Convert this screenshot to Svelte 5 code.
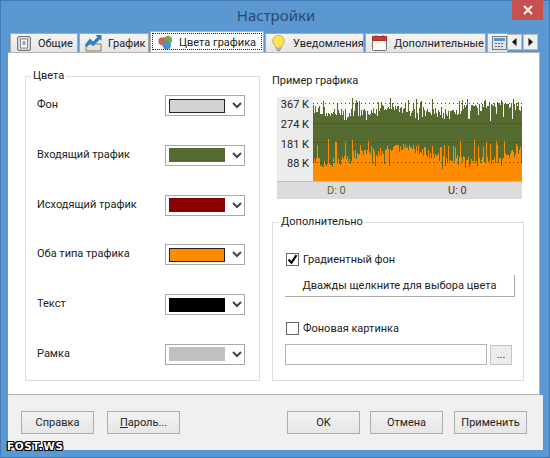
<script>
  const colorRows = [
    { label: 'Фон', color: '#d3d3d3', framed: true },
    { label: 'Входящий трафик', color: '#556b2f' },
    { label: 'Исходящий трафик', color: '#8b0000' },
    { label: 'Оба типа трафика', color: '#ff8c00', framed: true },
    { label: 'Текст', color: '#000000' },
    { label: 'Рамка', color: '#c0c0c0' }
  ];
  const axis = ['367 K', '274 K', '181 K', '88 K'];

  let seed = 41;
  const rnd = () => {
    seed = (seed * 16807) % 2147483647;
    return seed / 2147483647;
  };
  const W = 209;
  const H = 84;
  let green = '';
  let orange = '';
  for (let x = 0; x < W; x++) {
    const wave = Math.sin(x / 17) * 2.5 + Math.sin(x / 41) * 2;
    let g = 12 + wave + (rnd() - 0.5) * 9;
    if (rnd() < 0.14) g = 1 + rnd() * 6;
    if (rnd() < 0.1) g = 17 + rnd() * 7;
    let o = 58 + Math.sin(x / 23 + 1) * 6 + Math.sin(x / 9) * 2 + (rnd() - 0.5) * 10;
    if (rnd() < 0.1) o = 42 + rnd() * 8;
    if (rnd() < 0.1) o = 66 + rnd() * 6;
    green += `M${x + 0.5} ${g.toFixed(0)}V${H}`;
    orange += `M${x + 0.5} ${o.toFixed(0)}V${H}`;
  }
</script>

<div class="window">
  <header class="titlebar">
    <span class="title">Настройки</span>
    <button class="close" aria-label="Закрыть">
      <svg width="10" height="10" viewBox="0 0 10 10"><path d="M1 1l8 8M9 1l-8 8" stroke="#fff" stroke-width="2" /></svg>
    </button>
  </header>

  <nav class="tabs">
    <div class="tab w1">
      <svg width="14" height="15" viewBox="0 0 14 15"><rect x=".5" y=".5" width="13" height="14" rx="1.5" fill="#d4d4da" stroke="#77777f" /><rect x="3.5" y="3" width="7" height="9" fill="#f4f4f4" stroke="#8a8a90" /><path d="M5.5 6h3M5.5 8h3" stroke="#555" /></svg>
      <span>Общие</span>
    </div>
    <div class="tab w2">
      <svg width="17" height="17" viewBox="0 0 17 17"><path d="M1 9h15v7H1z" fill="#e9e2cc" stroke="#7c7c74" /><path d="M1 11l4-5 3 3 6-6" fill="none" stroke="#2f7fc4" stroke-width="3.2" /><path d="M10.5 0h6v6z" fill="#2f7fc4" /></svg>
      <span>График</span>
    </div>
    <div class="tab active">
      <svg width="15" height="15" viewBox="0 0 15 15"><circle cx="10" cy="5" r="4.2" fill="#6fae3c" /><circle cx="4.4" cy="6.2" r="4" fill="#c9674c" /><circle cx="8.8" cy="10.4" r="4.2" fill="#3f93d6" /></svg>
      <span>Цвета графика</span>
    </div>
    <div class="tab w4">
      <svg width="13" height="16" viewBox="0 0 13 16"><path d="M6.5 .5a5.7 5.7 0 0 0-3 10.6V13h6v-1.900a5.700 5.700 0 0 0-3-10.600z" fill="#ffe25a" stroke="#cdb137" /><path d="M4 14h5M5 15.500h3" stroke="#888" /></svg>
      <span>Уведомления</span>
    </div>
    <div class="tab w5">
      <svg width="15" height="16" viewBox="0 0 15 16"><rect x=".5" y="1.500" width="14" height="14" rx="1" fill="#fbfbf6" stroke="#77716a" /><rect x=".5" y="1.500" width="14" height="4" fill="#c9383a" stroke="#a83032" /><path d="M4 0v3M11 0v3" stroke="#555" /></svg>
      <span>Дополнительные</span>
    </div>
    <div class="tab w6">
      <svg width="15" height="14" viewBox="0 0 15 14"><rect x=".5" y=".5" width="14" height="13" fill="#dfe5ea" stroke="#6f7f8c" /><rect x="2" y="2" width="11" height="3" fill="#5f93bd" /><path d="M3 7.500h9M3 10.500h9" stroke="#55646f" stroke-dasharray="2 1" /></svg>
    </div>
    <div class="scroller">
      <button class="arrow" aria-label="Назад"><svg width="5" height="8" viewBox="0 0 5 8"><path d="M4.500 0v8L0 4z" fill="#111" /></svg></button>
      <button class="arrow" aria-label="Вперёд"><svg width="5" height="8" viewBox="0 0 5 8"><path d="M.5 0v8L5 4z" fill="#111" /></svg></button>
    </div>
  </nav>

  <main class="panel">
    <fieldset class="colors">
      <legend>Цвета</legend>
      {#each colorRows as row}
        <div class="color-row">
          <span class="row-label">{row.label}</span>
          <div class="picker">
            <span class="swatch" class:framed={row.framed} style="background: {row.color}"></span>
            <svg width="10" height="7" viewBox="0 0 10 7"><path d="M1 1l4 4 4-4" fill="none" stroke="#444" stroke-width="2" /></svg>
          </div>
        </div>
      {/each}
    </fieldset>

    <section class="right">
      <div class="sample-title">Пример графика</div>
      <div class="chart">
        <div class="chart-main">
          <div class="axis">
            {#each axis as a}<span>{a}</span>{/each}
          </div>
          <svg class="plot" width={W} height={H} viewBox="0 0 {W} {H}">
            <rect width={W} height={H} fill="#f8f8f3" />
            <path d={green} stroke="#556b2f" stroke-width="1" />
            <path d={orange} stroke="#ff8c00" stroke-width="1" />
            {#each [6, 26, 45, 65] as y}
              <path d="M0 {y + 0.5}H{W}" stroke="#2c2c1c" stroke-dasharray="1 3" stroke-opacity="0.8" />
            {/each}
          </svg>
        </div>
        <div class="chart-foot">
          <span class="down">D: 0</span>
          <span class="up">U: 0</span>
        </div>
      </div>

      <fieldset class="extra">
        <legend>Дополнительно</legend>
        <div class="check first">
          <span class="box"><svg width="11" height="11" viewBox="0 0 11 11"><path d="M1.500 5.500l3 3.200 5-7.500" fill="none" stroke="#111" stroke-width="2.200" /></svg></span>
          <span>Градиентный фон</span>
        </div>
        <button class="gradient">Дважды щелкните для выбора цвета</button>
        <div class="check second">
          <span class="box"></span>
          <span>Фоновая картинка</span>
        </div>
        <div class="file">
          <input type="text" aria-label="Фоновая картинка" />
          <button class="browse">...</button>
        </div>
      </fieldset>
    </section>
  </main>

  <footer class="footer">
    <button>Справка</button>
    <button><u>П</u>ароль...</button>
    <span class="spacer"></span>
    <button>OK</button>
    <button>Отмена</button>
    <button>Применить</button>
  </footer>

  <div class="watermark">FOST.WS</div>
</div>

<style>
  :global(body) {
    margin: 0;
    background: #5b97d1;
  }
  .window {
    position: relative;
    box-sizing: border-box;
    width: 550px;
    height: 458px;
    overflow: hidden;
    padding: 0 7px 8px 8px;
    background: #5b97d1;
    font-family: Roboto, "Liberation Sans", sans-serif;
    font-size: 11px;
    color: #222;
    box-shadow: inset 0 0 0 1px #3f79b6;
  }
  button {
    font: inherit;
    color: inherit;
    padding: 0;
  }
  .titlebar {
    position: relative;
    height: 31px;
    display: flex;
    justify-content: center;
  }
  .title {
    font-family: "Noto Sans", sans-serif;
    font-size: 15px;
    line-height: 31px;
    color: #2a4a6c;
    margin-left: 1px;
  }
  .close {
    position: absolute;
    top: 0;
    right: 0;
    width: 31px;
    height: 20px;
    border: 0;
    background: #c75050;
    display: flex;
    align-items: center;
    justify-content: center;
  }
  .tabs {
    display: flex;
    align-items: flex-end;
    height: 21px;
    padding-left: 2px;
  }
  .tab {
    box-sizing: border-box;
    height: 19px;
    display: flex;
    align-items: center;
    gap: 7px;
    padding-left: 6px;
    background: linear-gradient(#f4f4f4, #e4e4e4);
    border: 1px solid #a9a9a9;
    border-bottom: 0;
    margin-right: 1px;
    white-space: nowrap;
    overflow: hidden;
  }
  .tab svg {
    flex-shrink: 0;
  }
  .w1 { width: 68px; }
  .w2 { width: 70px; padding-left: 5px; gap: 6px; }
  .w4 { width: 99px; gap: 8px; }
  .w5 { width: 121px; }
  .w6 { width: 21px; margin-right: 0; padding-left: 4px; }
  .active {
    width: 114px;
    height: 21px;
    background: #fff;
    border-color: #b5b5b5;
    gap: 6px;
    padding-left: 7px;
    outline: 1px dotted #222;
    outline-offset: -3px;
  }
  .scroller {
    display: flex;
    gap: 1px;
    margin-left: -1px;
    margin-bottom: 2px;
  }
  .arrow {
    box-sizing: border-box;
    width: 15px;
    height: 16px;
    border: 1px solid #bdbdbd;
    background: #f0f0f0;
    display: flex;
    align-items: center;
    justify-content: center;
  }
  .panel {
    box-sizing: border-box;
    height: 343px;
    margin-right: 3px;
    padding: 15px 15px 0 17px;
    background: #fff;
    border: 1px solid #b5b5b5;
    border-left: 0;
    display: flex;
    gap: 12px;
  }
  fieldset {
    box-sizing: border-box;
    margin: 0;
    min-width: 0;
    border: 1px solid #dcdcdc;
  }
  legend {
    padding: 0 2px;
    line-height: 16px;
  }
  .colors {
    width: 235px;
    height: 313px;
    padding: 11px 14px 0 11px;
  }
  .colors legend {
    margin-left: -6px;
  }
  .color-row {
    display: flex;
    align-items: center;
    justify-content: space-between;
    height: 21px;
    margin-bottom: 28.8px;
  }
  .row-label {
    padding-bottom: 2px;
  }
  .picker {
    box-sizing: border-box;
    width: 80px;
    height: 21px;
    border: 1px solid #a9a9a9;
    padding: 0 0 0 3px;
    display: flex;
    align-items: center;
    gap: 7px;
  }
  .swatch {
    box-sizing: border-box;
    width: 56px;
    height: 14px;
  }
  .swatch.framed {
    border: 1px solid #222;
  }
  .right {
    width: 252px;
  }
  .sample-title {
    height: 16px;
    line-height: 16px;
    margin-top: 5px;
    margin-bottom: 8px;
  }
  .chart {
    width: 245px;
    margin-left: 5px;
  }
  .chart-main {
    display: flex;
    height: 84px;
    background: #ececec;
  }
  .axis {
    box-sizing: border-box;
    width: 36px;
    padding: 0 4px 0 0;
    display: flex;
    flex-direction: column;
    align-items: flex-end;
    white-space: nowrap;
  }
  .axis span {
    height: 19.8px;
    line-height: 19.8px;
    position: relative;
    top: -2px;
  }
  .plot {
    display: block;
  }
  .chart-foot {
    box-sizing: border-box;
    height: 18px;
    background: #dcdcdc;
    border-top: 1px solid #bbb;
    display: flex;
    line-height: 17px;
  }
  .down {
    width: 50px;
    margin-left: 50px;
    color: #55683a;
  }
  .up {
    margin-left: 71px;
    color: #7d1a22;
  }
  .extra {
    height: 167px;
    margin-top: 15px;
    padding: 0 9px 0 13px;
  }
  .extra legend {
    margin-left: -7px;
  }
  .check {
    display: flex;
    align-items: center;
    gap: 4px;
    height: 14px;
  }
  .first {
    margin-top: 22px;
  }
  .second {
    margin-top: 24px;
  }
  .box {
    box-sizing: border-box;
    width: 13px;
    height: 13px;
    border: 1px solid #666;
    background: #fff;
    display: flex;
    align-items: center;
    justify-content: center;
  }
  .gradient {
    display: block;
    box-sizing: border-box;
    width: 230px;
    height: 22px;
    margin: 9px 0 0 -1px;
    background: #fff;
    border: 0;
    border-right: 1px solid #a9a9a9;
    border-bottom: 1px solid #a9a9a9;
  }
  .file {
    display: flex;
    gap: 3px;
    margin-top: 9px;
    margin-left: -1px;
  }
  input {
    box-sizing: border-box;
    width: 202px;
    height: 21px;
    margin: 0;
    border: 1px solid #b5b5b5;
    background: #fff;
  }
  .browse {
    box-sizing: border-box;
    width: 22px;
    height: 20px;
    margin-top: 1px;
    border: 1px solid #c4c4c4;
    background: #ececec;
    line-height: 18px;
  }
  .footer {
    height: 55px;
    padding: 16px 16px 0 13px;
    box-sizing: border-box;
    background: #f0f0f0;
    display: flex;
    align-items: flex-start;
    gap: 10px;
  }
  .footer button {
    box-sizing: border-box;
    width: 73px;
    height: 23px;
    border: 1px solid #adadad;
    background: linear-gradient(#f2f2f2, #e6e6e6);
  }
  .footer button:nth-child(2) {
    margin-left: 3px;
  }
  .footer button:last-child {
    margin-left: 1px;
  }
  .spacer {
    flex: 1;
  }
  .watermark {
    position: absolute;
    left: 7px;
    top: 440px;
    font-family: "DejaVu Sans", sans-serif;
    font-weight: 900;
    font-size: 10.5px;
    line-height: 13px;
    letter-spacing: 0.6px;
    color: #fff;
    text-shadow: 1px 0 #000, -1px 0 #000, 0 1px #000, 0 -1px #000, 1px 1px #000, -1px -1px #000, 1px -1px #000, -1px 1px #000;
  }
</style>
